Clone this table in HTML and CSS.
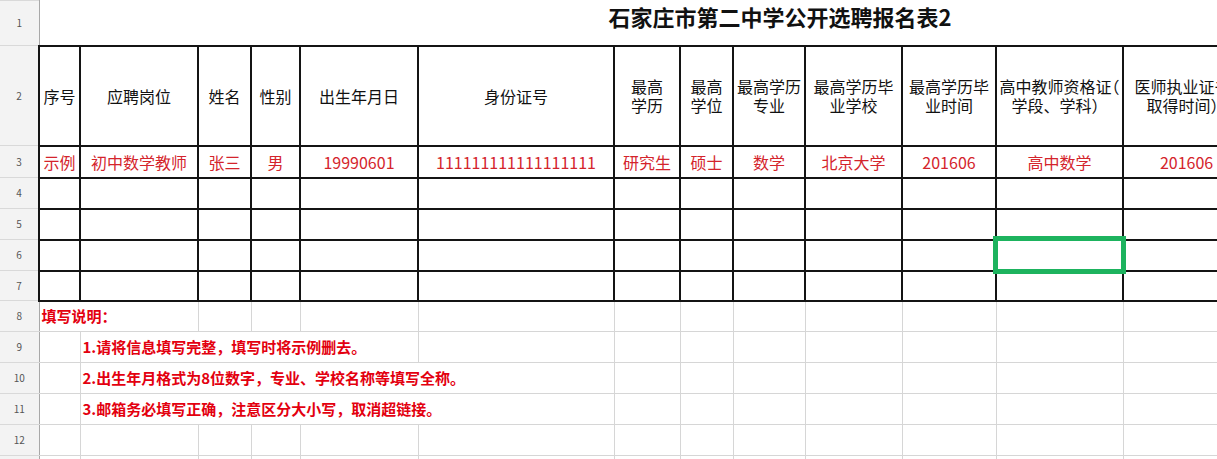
FILE: index.html
```html
<!DOCTYPE html>
<html lang="zh-CN">
<head>
<meta charset="utf-8">
<title>石家庄市第二中学公开选聘报名表2</title>
<link rel="stylesheet" href="styles.css">
</head>
<body>
<table class="sheet">
  <colgroup>
    <col class="c-rh"><col class="c-a"><col class="c-b"><col class="c-c"><col class="c-d"><col class="c-e"><col class="c-f"><col class="c-g"><col class="c-h"><col class="c-i"><col class="c-j"><col class="c-k"><col class="c-l"><col class="c-m">
  </colgroup>
  <tr class="r1">
    <td class="rh">1</td>
    <td class="title" colspan="13">石家庄市第二中学公开选聘报名表2</td>
  </tr>
  <tr class="r2 grid-b">
    <td class="rh">2</td>
    <td>序号</td><td>应聘岗位</td><td>姓名</td><td>性别</td><td>出生年月日</td><td>身份证号</td>
    <td class="ml">最高<br>学历</td><td class="ml">最高<br>学位</td><td class="ml">最高学历<br>专业</td>
    <td class="ml">最高学历毕<br>业学校</td><td class="ml">最高学历毕<br>业时间</td>
    <td class="ml">高中教师资格证<span class="pp">（</span><br>学段、学科）</td><td class="ml">医师执业证书<span class="pp">（</span><br>取得时间）</td>
  </tr>
  <tr class="r3 grid-b red">
    <td class="rh">3</td>
    <td>示例</td><td>初中数学教师</td><td>张三</td><td>男</td><td>19990601</td><td>111111111111111111</td>
    <td>研究生</td><td>硕士</td><td>数学</td><td>北京大学</td><td>201606</td><td>高中数学</td><td>201606</td>
  </tr>
  <tr class="rr grid-b"><td class="rh">4</td><td></td><td></td><td></td><td></td><td></td><td></td><td></td><td></td><td></td><td></td><td></td><td></td><td></td></tr>
  <tr class="rr grid-b"><td class="rh">5</td><td></td><td></td><td></td><td></td><td></td><td></td><td></td><td></td><td></td><td></td><td></td><td></td><td></td></tr>
  <tr class="rr grid-b"><td class="rh">6</td><td></td><td></td><td></td><td></td><td></td><td></td><td></td><td></td><td></td><td></td><td></td><td class="sel"><div class="sel-box"></div></td><td></td></tr>
  <tr class="rr rr-last grid-b"><td class="rh">7</td><td></td><td></td><td></td><td></td><td></td><td></td><td></td><td></td><td></td><td></td><td></td><td></td><td></td></tr>
  <tr class="rn grid-l">
    <td class="rh">8</td>
    <td class="note note-head" colspan="2">填写说明：</td><td></td><td></td><td></td><td></td><td></td><td></td><td></td><td></td><td></td><td></td><td></td>
  </tr>
  <tr class="rn grid-l">
    <td class="rh">9</td>
    <td></td><td class="note" colspan="4">1.请将信息填写完整，填写时将示例删去。</td><td></td><td></td><td></td><td></td><td></td><td></td><td></td><td></td>
  </tr>
  <tr class="rn grid-l">
    <td class="rh">10</td>
    <td></td><td class="note" colspan="5">2.出生年月格式为8位数字，专业、学校名称等填写全称。</td><td></td><td></td><td></td><td></td><td></td><td></td><td></td>
  </tr>
  <tr class="rn grid-l">
    <td class="rh">11</td>
    <td></td><td class="note" colspan="5">3.邮箱务必填写正确，注意区分大小写，取消超链接。</td><td></td><td></td><td></td><td></td><td></td><td></td><td></td>
  </tr>
  <tr class="rn grid-l">
    <td class="rh">12</td>
    <td></td><td></td><td></td><td></td><td></td><td></td><td></td><td></td><td></td><td></td><td></td><td></td><td></td>
  </tr>
  <tr class="rtail grid-l">
    <td class="rh"></td>
    <td></td><td></td><td></td><td></td><td></td><td></td><td></td><td></td><td></td><td></td><td></td><td></td><td></td>
  </tr>
</table>
</body>
</html>
```

FILE: styles.css
```css
html, body {
  margin: 0;
  padding: 0;
  background: #ffffff;
  overflow: hidden;
}

body {
  font-family: "Noto Sans CJK SC", "Noto Sans", sans-serif;
  color: #111111;
}

.sheet {
  border-collapse: collapse;
  table-layout: fixed;
  width: 1250px;
}

.c-rh { width: 39px; }
.c-a { width: 41px; }
.c-b { width: 118px; }
.c-c { width: 53px; }
.c-d { width: 49px; }
.c-e { width: 118px; }
.c-f { width: 196px; }
.c-g { width: 66px; }
.c-h { width: 53px; }
.c-i { width: 72px; }
.c-j { width: 97px; }
.c-k { width: 94px; }
.c-l { width: 127px; }
.c-m { width: 127px; }

.sheet td {
  padding: 0 2px;
  white-space: nowrap;
  overflow: visible;
  text-align: center;
  vertical-align: middle;
  font-size: 16px;
  line-height: 20px;
  color: #111111;
}

.sheet td.rh {
  background: #f3f3f3;
  color: #555555;
  font-size: 10px;
  border-top: 1px solid #d9d9d9;
  border-bottom: 1px solid #d9d9d9;
  border-left: none;
  border-right: 1px solid #a8a8a8;
}

.r1 { height: 45px; }
.r2 { height: 100px; }
.r3 { height: 32px; }
.rr { height: 31px; }
.rr-last { height: 30px; }
.rn { height: 31px; }
.rtail { height: 4px; }

.sheet td.title {
  text-align: left;
  vertical-align: top;
  padding: 0 0 0 569px;
  font-size: 22px;
  line-height: 31px;
  font-weight: 700;
  color: #111111;
  border: none;
}

.grid-b td:not(.rh) {
  border: 2px solid #141414;
}

.grid-l td:not(.rh) {
  border: 1px solid #d6d6d6;
}

.red td:not(.rh) {
  color: #d4242c;
}

.sheet td.ml {
  line-height: 19px;
}

.pp {
  font-feature-settings: "halt" 1;
}

.sheet td.note {
  text-align: left;
  font-size: 15px;
  font-weight: 700;
  color: #e3000f;
  padding-left: 2px;
}

.sel {
  position: relative;
}

.sel-box {
  position: absolute;
  left: -4px;
  right: -4px;
  top: -5px;
  bottom: -4px;
  border: 5px solid #1db35e;
  box-sizing: border-box;
}
```
